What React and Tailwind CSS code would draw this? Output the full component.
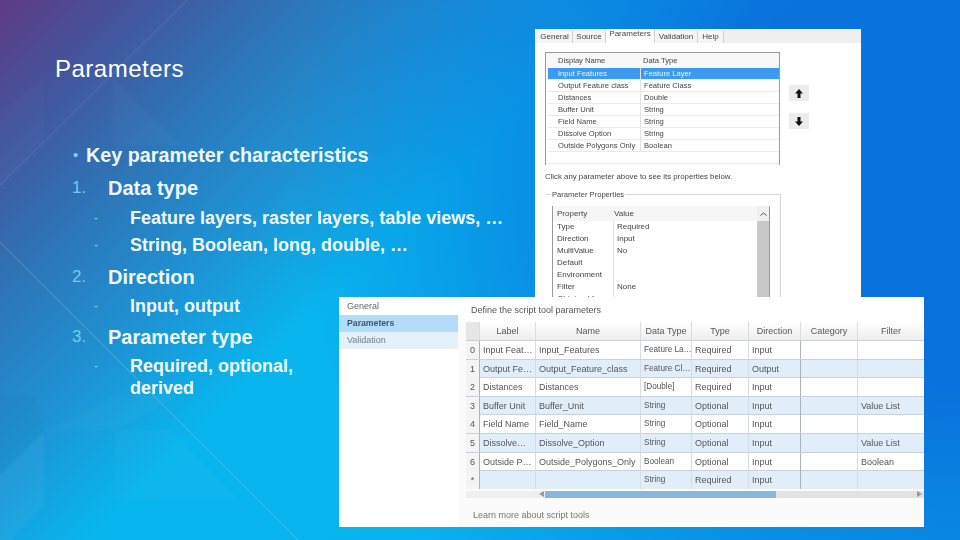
const backRows = [
  ['Input Features', 'Feature Layer'],
  ['Output Feature class', 'Feature Class'],
  ['Distances', 'Double'],
  ['Buffer Unit', 'String'],
  ['Field Name', 'String'],
  ['Dissolve Option', 'String'],
  ['Outside Polygons Only', 'Boolean'],
  ['', ''],
]

const propRows = [
  ['Type', 'Required'],
  ['Direction', 'Input'],
  ['MultiValue', 'No'],
  ['Default', ''],
  ['Environment', ''],
  ['Filter', 'None'],
  ['Obtained from', ''],
]

const tabs = [
  { label: 'General', width: 'w-[36px]' },
  { label: 'Source', width: 'w-[33px]' },
  { label: 'Parameters', width: 'w-[49px]' },
  { label: 'Validation', width: 'w-[43px]' },
  { label: 'Help', width: 'w-[26px]' },
]

const frontCols = ['Label', 'Name', 'Data Type', 'Type', 'Direction', 'Category', 'Filter']

const frontRows = [
  ['0', 'Input Feat…', 'Input_Features', 'Feature La…', 'Required', 'Input', '', ''],
  ['1', 'Output Fe…', 'Output_Feature_class', 'Feature Cl…', 'Required', 'Output', '', ''],
  ['2', 'Distances', 'Distances', '[Double]', 'Required', 'Input', '', ''],
  ['3', 'Buffer Unit', 'Buffer_Unit', 'String', 'Optional', 'Input', '', 'Value List'],
  ['4', 'Field Name', 'Field_Name', 'String', 'Optional', 'Input', '', ''],
  ['5', 'Dissolve…', 'Dissolve_Option', 'String', 'Optional', 'Input', '', 'Value List'],
  ['6', 'Outside P…', 'Outside_Polygons_Only', 'Boolean', 'Optional', 'Input', '', 'Boolean'],
  ['*', '', '', 'String', 'Required', 'Input', '', ''],
]

const gridCols = 'grid grid-cols-[13px_56px_105px_51px_57px_52px_57px_1fr]'

function SubItem({ children }) {
  return (
    <div className="flex text-[18px] leading-[22px] font-bold text-[#eef9ff]">
      <span className="w-[75px] pl-[39px] shrink-0 font-normal text-[12px] text-[#7fd4f4]">-</span>
      <span className="w-[200px] whitespace-nowrap">{children}</span>
    </div>
  )
}

function NumItem({ n, children, className }) {
  return (
    <div className={`flex text-[20px] leading-6 font-bold text-[#eef9ff] ${className}`}>
      <span className="w-[53px] pl-[17px] shrink-0 font-normal text-[17px] text-[#6fcdf2]">{n}</span>
      {children}
    </div>
  )
}

function BackDialog() {
  return (
    <div className="absolute left-[535px] top-[29px] w-[326px] h-[268px] bg-white overflow-hidden text-[7.6px] text-[#444] blur-[0.35px] font-['Liberation_Sans',sans-serif]">
      {/* Tabs */}
      <div className="h-[14px] bg-[#f0f0f0] flex items-end pl-[2px] text-[8px]">
        {tabs.map((t) => (
          <div
            key={t.label}
            className={`${t.width} text-center border-r border-[#d0d0d0] ${t.label === 'Parameters' ? 'h-[15px] bg-white leading-[12px]' : 'h-[12px] leading-[12px] bg-[#f5f5f5]'}`}
          >
            {t.label}
          </div>
        ))}
      </div>

      <div className="pl-[10px] pt-[9px] flex">
        <div className="w-[235px] h-[113px] border-t border-l border-r border-[#9a9a9a]">
          <div className="h-[15px] pl-[12px] grid grid-cols-[85px_1fr] items-center bg-[#f8f8f8]">
            <span>Display Name</span>
            <span>Data Type</span>
          </div>
          {backRows.map((r, i) => (
            <div
              key={i}
              className={`h-[12px] ml-[2px] pl-[10px] grid grid-cols-[82px_1fr] items-center border-b border-[#eaeaea] ${i === 0 ? 'bg-[#3c9af0] text-[#e8f4ff]' : ''}`}
            >
              <span className="leading-[11px] whitespace-nowrap">{r[0]}</span>
              <span className="pl-[3px] leading-[11px] border-l border-[#e2e2e2]">{r[1]}</span>
            </div>
          ))}
        </div>
        <div className="ml-[9px] mt-[33px] flex flex-col gap-[8px]">
          <button className="w-[20px] h-[16px] bg-[#ececec] flex items-center justify-center">
            <svg width="8" height="9" viewBox="0 0 8 9"><path d="M4 0 8 4.5H5.5V9h-3V4.5H0z" fill="#111" /></svg>
          </button>
          <button className="w-[20px] h-[16px] mt-[4px] bg-[#ececec] flex items-center justify-center">
            <svg width="8" height="9" viewBox="0 0 8 9"><path d="M4 9 8 4.5H5.5V0h-3v4.5H0z" fill="#111" /></svg>
          </button>
        </div>
      </div>

      <div className="pl-[10px] mt-[6px] text-[7.8px] leading-[12px]">Click any parameter above to see its properties below.</div>

      {/* Parameter Properties */}
      <div className="relative ml-[11px] mt-[11px] w-[235px] h-[120px] border-t border-r border-[#d5d5d5]">
        <span className="absolute left-[5px] -top-[5px] bg-white px-[1px] leading-[10px]">Parameter Properties</span>
        <div className="ml-[6px] mt-[11px] w-[218px] border-l border-r border-[#9a9a9a] flex text-[8px]">
          <div className="flex-1">
            <div className="h-[15px] grid grid-cols-[57px_1fr] items-center pl-[4px] bg-[#f6f6f6]">
              <span>Property</span>
              <span>Value</span>
            </div>
            {propRows.map((r) => (
              <div key={r[0]} className="h-[12px] first:mt-[1px] grid grid-cols-[57px_1fr] items-center pl-[4px]">
                <span className="border-r border-[#e2e2e2] whitespace-nowrap overflow-hidden">{r[0]}</span>
                <span className="pl-[3px]">{r[1]}</span>
              </div>
            ))}
          </div>
          <div className="w-[12px] bg-[#c8c8c8] flex flex-col">
            <div className="h-[15px] bg-[#f0f0f0] flex items-center justify-center">
              <svg width="7" height="4" viewBox="0 0 7 4"><path d="M0.5 3.5 3.5 1l3 2.5" stroke="#555" fill="none" /></svg>
            </div>
          </div>
        </div>
      </div>
    </div>
  )
}

function FrontDialog() {
  return (
    <div className="absolute left-[339px] top-[297px] w-[585px] h-[230px] bg-white flex text-[9px] text-[#555] blur-[0.35px] font-['Liberation_Sans',sans-serif]">
      <div className="w-[119px] shrink-0">
        <div className="h-[18px] pl-[8px] leading-[18px] text-[#666]">General</div>
        <div className="h-[17px] pl-[8px] leading-[17px] text-[8.7px] font-bold bg-[#b3dcfb] text-[#3d5568]">Parameters</div>
        <div className="h-[17px] pl-[8px] leading-[17px] bg-[#e4f0fa] text-[#6f7f8e]">Validation</div>
      </div>
      <div className="flex-1 bg-[#fbfbfb] pl-[8px] pt-[6px]">
        <div className="bg-white -ml-[8px] -mt-[6px] pl-[13px] pt-[7px] h-[25px] leading-[12px]">Define the script tool parameters</div>
        <div>
          {/* Header */}
          <div className={`${gridCols} h-[18px] items-center text-center bg-gradient-to-b from-white to-[#eeeeee]`}>
            <span className="h-full bg-[#e6e6e6]" />
            {frontCols.map((c) => (
              <span key={c} className="border-l border-[#dcdcdc] leading-[18px]">{c}</span>
            ))}
          </div>
          {frontRows.map((r, i) => (
            <div
              key={r[0]}
              className={`${gridCols} h-[18.6px] items-center border-t border-[#c8d2da] ${i % 2 ? 'bg-[#e1eefa]' : 'bg-white'}`}
            >
              <span className="h-full leading-[18px] text-center bg-[#f4f4f4]">{r[0]}</span>
              {r.slice(1).map((c, j) => (
                <span
                  key={j}
                  className={`h-full leading-[18px] pl-[3px] border-l whitespace-nowrap overflow-hidden ${j === 2 ? 'text-[8.2px]' : ''} ${j === 0 || j === 5 ? 'border-[#a9b4bd]' : 'border-[#d4dde4]'}`}
                >
                  {c}
                </span>
              ))}
            </div>
          ))}
          {/* Horizontal scrollbar */}
          <div className="h-[7px] mt-[2px] flex items-center bg-[#e2e2e2]">
            <div className="w-[79px] h-full bg-[#efefef] flex justify-end items-center pr-[1px]">
              <svg width="5" height="6" viewBox="0 0 5 6"><path d="M5 0v6L0 3z" fill="#999" /></svg>
            </div>
            <div className="w-[231px] h-full bg-[#84b8dc]" />
            <div className="flex-1" />
            <svg width="5" height="6" viewBox="0 0 5 6" className="mr-[2px]"><path d="M0 0v6l5-3z" fill="#999" /></svg>
          </div>
        </div>
        <div className="mt-[11px] pl-[7px] leading-[12px] text-[#6f7d58]">Learn more about script tools</div>
      </div>
    </div>
  )
}

export default function App() {
  return (
    <div className="relative w-[960px] h-[540px] overflow-hidden font-['Liberation_Sans',sans-serif] bg-[radial-gradient(ellipse_70%_120%_at_100%_30%,#0a72dc_35%,transparent_100%),linear-gradient(135deg,#5f3a84_0%,#44549c_9%,#2d76b8_20%,#1e93d4_31%,#08b6ee_42%,#08b0ee_100%)]">
      {/* Background facets */}
      <svg className="absolute inset-0" width="960" height="540" viewBox="0 0 960 540">
        <path d="M0 185 187 0" stroke="#ffffff" strokeOpacity="0.14" fill="none" />
        <path d="M0 242 298 540" stroke="#ffffff" strokeOpacity="0.2" fill="none" />
        <path d="M0 112 44 78V140L0 185z" fill="#ffffff" fillOpacity="0.015" />
        <path d="M113 78 180 145H113z" fill="#ffffff" fillOpacity="0.025" />
        <path d="M44 432 115 395H180L118 430z" fill="#ffffff" fillOpacity="0.025" />
        <path d="M0 475 44 432V505L10 540H0z" fill="#ffffff" fillOpacity="0.04" />
        <path d="M115 430H170L240 500H115z" fill="#ffffff" fillOpacity="0.025" />
        <path d="M0 395H35L44 432 0 475z" fill="#000000" fillOpacity="0.02" />
      </svg>

      {/* Slide text */}
      <div className="relative pl-[55px] pt-[55px]">
        <h1 className="text-[24px] leading-[28px] font-normal tracking-[0.5px] text-white">Parameters</h1>
        <div className="mt-[60px] flex text-[19.8px] leading-6 font-bold text-[#eef9ff]">
          <span className="w-[31px] pl-[18px] font-normal text-[15px] text-[#7fd0f0]">•</span>
          Key parameter characteristics
        </div>
        <NumItem n="1." className="mt-[9px]">Data type</NumItem>
        <div className="mt-[7px] flex flex-col gap-[5px]">
          <SubItem>Feature layers, raster layers, table views, …</SubItem>
          <SubItem>String, Boolean, long, double, …</SubItem>
        </div>
        <NumItem n="2." className="mt-[9px]">Direction</NumItem>
        <div className="mt-[6px]"><SubItem>Input, output</SubItem></div>
        <NumItem n="3." className="mt-[8px]">Parameter type</NumItem>
        <div className="mt-[6px]"><SubItem>Required, optional,<br />derived</SubItem></div>
      </div>

      <BackDialog />
      <FrontDialog />
    </div>
  )
}
